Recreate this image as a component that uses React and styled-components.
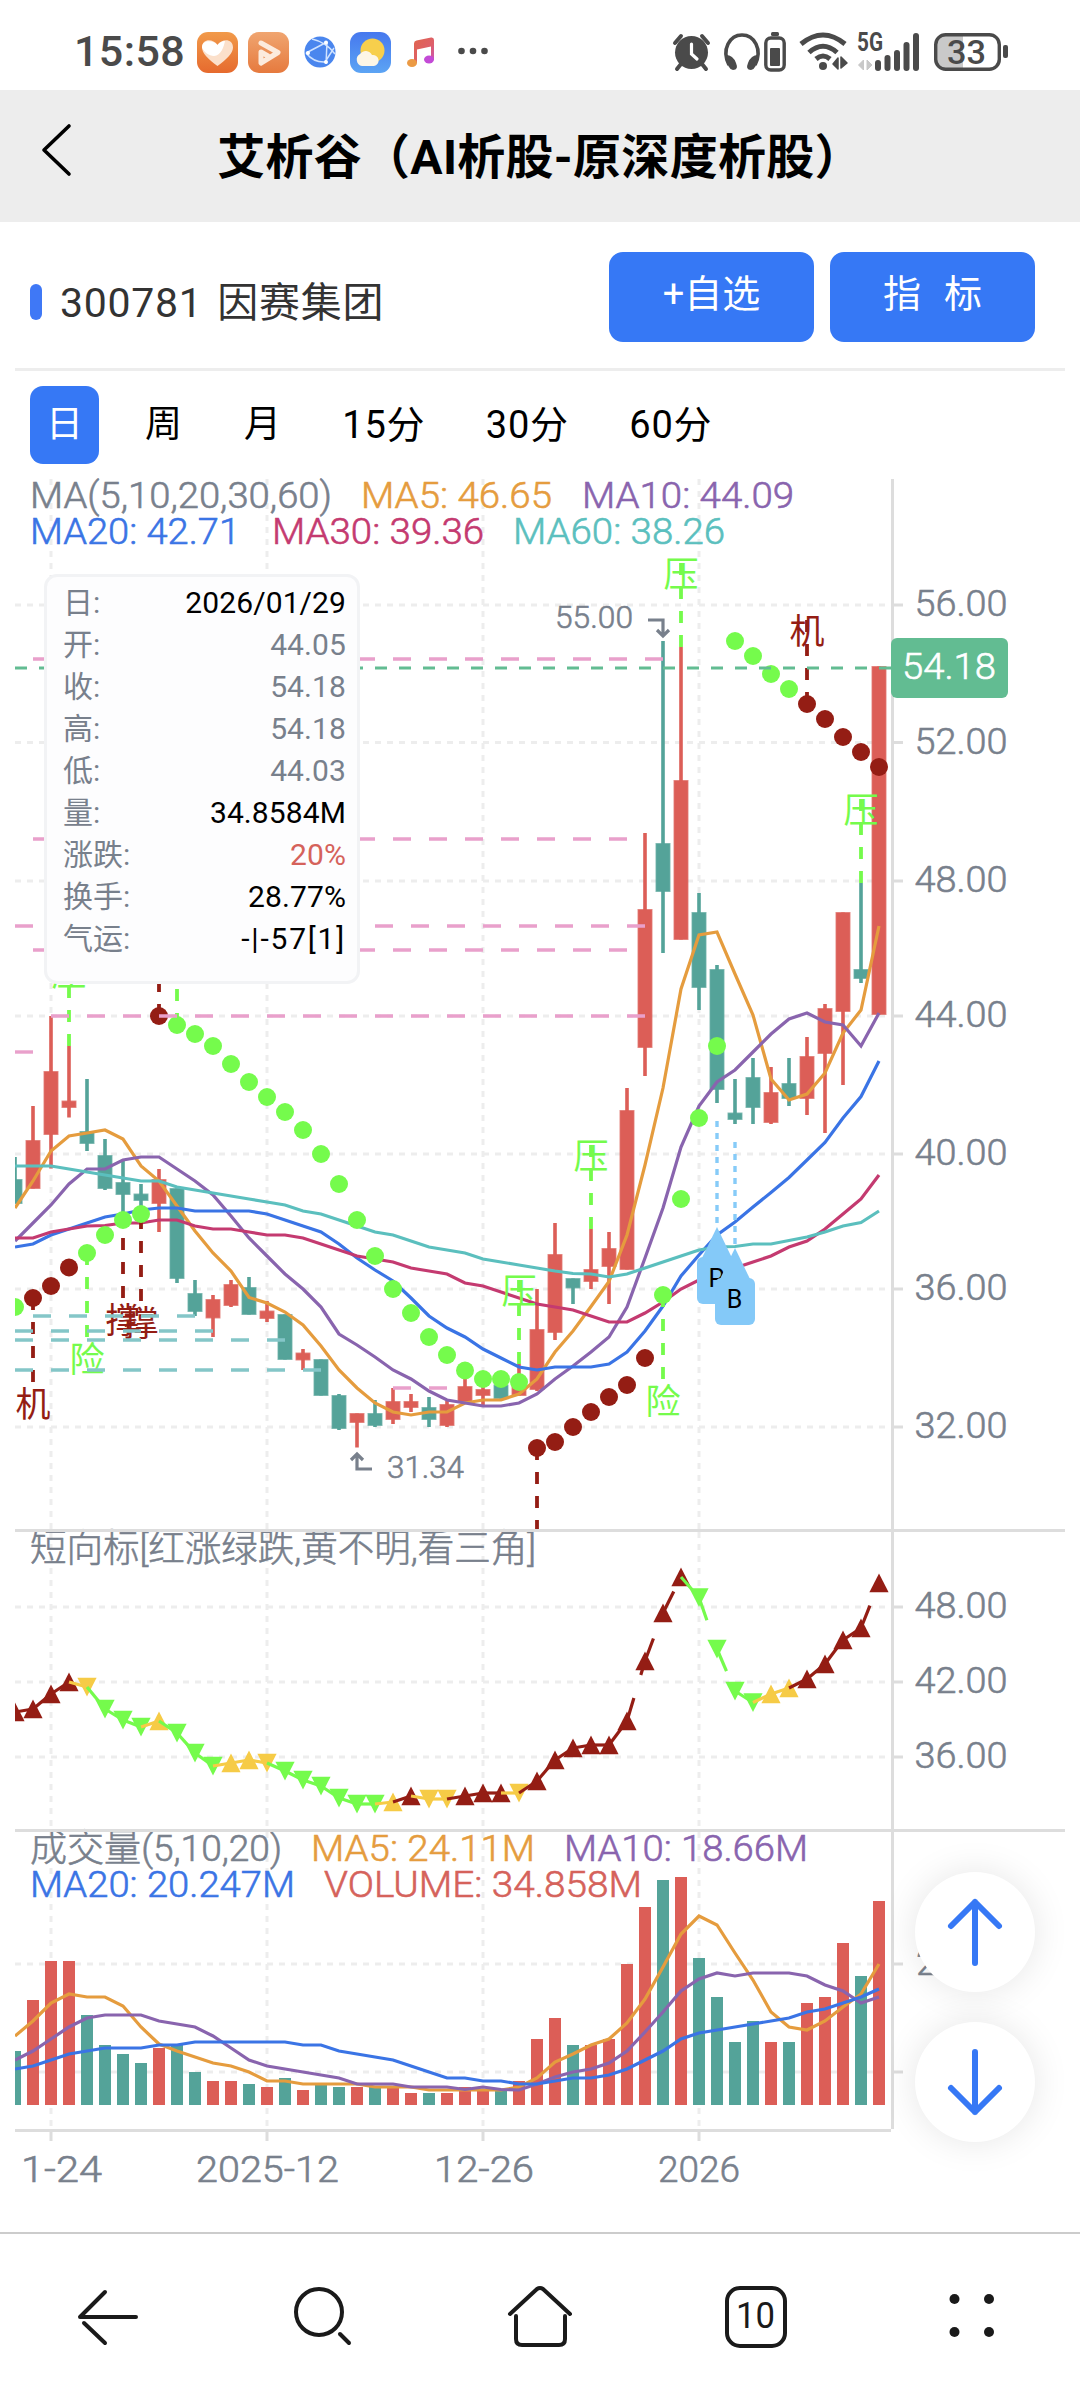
import React from 'react';
import styled, { createGlobalStyle } from 'styled-components';

const FONT = 'Roboto, "Noto Sans CJK SC", sans-serif';
const BLUE = '#3678f5';
const RED = '#dc5e57';
const TEAL = '#54a399';
const LIME = '#75fb4c';
const DARK = '#941d14';
const GOLD = '#f6cb46';
const GREY = '#78808c';
const AXIS = '#dddddd';
const GRID = '#ededed';

const GlobalStyle = createGlobalStyle`
  html, body {
    margin: 0;
    padding: 0;
    background: #fff;
  }
  body {
    width: 1080px;
    font-family: ${FONT};
  }
  svg {
    display: block;
    overflow: visible;
  }
  svg text {
    font-family: ${FONT};
  }
`;

const SPage = styled.div`
  width: 1080px;
  height: 2400px;
  display: flex;
  flex-direction: column;
  overflow: hidden;
  background: #fff;
`;
const SStatusBar = styled.div`
  height: 90px;
  box-sizing: border-box;
  padding: 24px 71px 10px 74px;
  display: flex;
  align-items: center;
  justify-content: space-between;
`;
const SStatusGroup = styled.div`
  display: flex;
  align-items: center;
  height: 56px;
`;
const SClock = styled.div`
  width: 112px;
  margin-top: -2px;
  color: #4a4a4a;
  font-size: 43px;
  line-height: 56px;
  font-weight: 500;
  letter-spacing: 0.4px;
`;
const SStatusIcon = styled.svg`
  flex: none;
  margin-left: ${p => p.$ml || 0}px;
`;
const SHeader = styled.div`
  height: 132px;
  background: #ededed;
  display: grid;
  grid-template-columns: 108px 1fr 108px;
  align-items: center;
`;
const SBack = styled.svg`
  margin: -12px 0 0 36px;
`;
const STitle = styled.div`
  padding-top: 4px;
  color: #000;
  font-size: 48px;
  line-height: 60px;
  font-weight: 700;
  letter-spacing: 0.3px;
  text-align: center;
  white-space: nowrap;
`;
const SStockRow = styled.div`
  height: 146px;
  box-sizing: border-box;
  padding: 30px 45px 26px 30px;
  display: flex;
  align-items: center;
`;
const SMark = styled.div`
  width: 12px;
  height: 36px;
  border-radius: 6px;
  background: #3f78f6;
  margin-top: 10px;
`;
const SStockName = styled.div`
  flex: 1;
  margin: 12px 0 0 18px;
  color: #333;
  font-size: 41px;
  line-height: 50px;
  letter-spacing: 0.7px;
  word-spacing: 4px;
`;
const SButton = styled.button`
  width: 205px;
  height: 90px;
  margin: 0 0 0 ${p => (p.$second ? 16 : 0)}px;
  padding: 0 0 5px;
  border: 0;
  border-radius: 14px;
  background: ${BLUE};
  color: #fff;
  font-family: inherit;
  font-size: 38px;
  line-height: 85px;
  word-spacing: ${p => (p.$second ? 2 : 0)}px;
  white-space: pre;
`;
const SDivider = styled.div`
  height: 3px;
  margin: 0 15px;
  background: #ededed;
`;
const STabs = styled.div`
  height: 108px;
  box-sizing: border-box;
  padding: 15px 30px;
  display: flex;
  gap: 30px;
`;
const STab = styled.div`
  width: ${p => (p.$wide ? 113.5 : 69)}px;
  height: 78px;
  line-height: 78px;
  border-radius: 13px;
  text-align: center;
  font-size: ${p => (p.$wide ? 38 : 37)}px;
  letter-spacing: ${p => (p.$wide ? 0.7 : 0)}px;
  color: ${p => (p.$active ? '#fff' : '#000')};
  background: ${p => (p.$active ? BLUE : 'transparent')};
`;
const SChartArea = styled.div`
  position: relative;
  height: 1753px;
`;
const STooltip = styled.div`
  position: absolute;
  left: 44px;
  top: 95px;
  width: 316px;
  height: 410px;
  box-sizing: border-box;
  padding: 5px 11px 0 16px;
  border: 3px solid #f2f3f5;
  border-radius: 13px;
  background: #fdfdfe;
`;
const STipRow = styled.div`
  display: flex;
  justify-content: space-between;
  height: 42px;
  line-height: 42px;
  font-size: 30px;
`;
const STipLabel = styled.span`
  color: ${GREY};
`;
const STipValue = styled.span`
  color: ${p => p.$color || '#000'};
  letter-spacing: ${p => (p.$spread ? 1.8 : 0.1)}px;
`;
const SFloat = styled.div`
  position: absolute;
  left: 915px;
  top: 1393px;
  display: flex;
  flex-direction: column;
  gap: 30px;
`;
const SRound = styled.div`
  width: 120px;
  height: 120px;
  border-radius: 60px;
  background: #fff;
  box-shadow: 0 0 36px rgba(0, 0, 0, 0.1);
`;
const SNav = styled.div`
  height: 168px;
  box-sizing: border-box;
  border-top: 2px solid #cccccc;
  display: flex;
`;
const SNavItem = styled.div`
  flex: 1;
  display: flex;
  align-items: center;
  justify-content: center;
`;

// bars are 18px apart, the first one is cut by the left edge of the pane
const px = i => 15 + 18 * i;

// [direction, high, body top, body bottom, low]
const candles = [
  ['d', 1157, 1179.5, 1203.5, 1203.5],
  ['u', 1106, 1140.5, 1188.5, 1188.5],
  ['u', 1016, 1071.5, 1134.5, 1168.5],
  ['u', 1046, 1101, 1107.5, 1117.5],
  ['d', 1079, 1131.5, 1143.5, 1151],
  ['d', 1139, 1155.5, 1188.5, 1190],
  ['d', 1160, 1182.5, 1194.5, 1214],
  ['d', 1184, 1194, 1200.5, 1209],
  ['u', 1169, 1179.5, 1203.5, 1232],
  ['d', 1188.5, 1188.5, 1278.5, 1283],
  ['d', 1280, 1293.5, 1311.5, 1316],
  ['u', 1295, 1299.5, 1318, 1337],
  ['u', 1280, 1284.5, 1305.5, 1307],
  ['d', 1277, 1287.5, 1314.5, 1314.5],
  ['u', 1301, 1311, 1318.5, 1322],
  ['d', 1314.5, 1314.5, 1359.5, 1359.5],
  ['u', 1349, 1353, 1360, 1370],
  ['d', 1359.5, 1359.5, 1395.5, 1395.5],
  ['d', 1394, 1395.5, 1428.5, 1430],
  ['u', 1413.5, 1413.5, 1422.5, 1447.5],
  ['d', 1400, 1413.5, 1425.5, 1427],
  ['u', 1388, 1401.5, 1419.5, 1424],
  ['u', 1394, 1401.5, 1407.5, 1412],
  ['d', 1397, 1407.5, 1419.5, 1427],
  ['u', 1401, 1404.5, 1425.5, 1427],
  ['u', 1378, 1386.5, 1401.5, 1401.5],
  ['u', 1385, 1389.5, 1395.5, 1406],
  ['d', 1385, 1385, 1398.5, 1398.5],
  ['u', 1364, 1385, 1395.5, 1395.5],
  ['u', 1289, 1329.5, 1389.5, 1391],
  ['u', 1223, 1254.5, 1332.5, 1340],
  ['d', 1278.5, 1278.5, 1288, 1304],
  ['u', 1229, 1269.5, 1281.5, 1289],
  ['u', 1232, 1248.5, 1266.5, 1304],
  ['u', 1088, 1110.5, 1269.5, 1269.5],
  ['u', 833, 909.5, 1047.5, 1076],
  ['d', 641, 843.5, 891.5, 953],
  ['u', 647, 780.5, 939.5, 939.5],
  ['d', 893, 912.5, 987.5, 1010],
  ['d', 965, 969.5, 1089.5, 1103],
  ['d', 1079, 1113, 1119.5, 1124],
  ['d', 1058, 1077.5, 1107.5, 1124],
  ['u', 1067, 1092.5, 1122.5, 1124],
  ['d', 1058, 1083.5, 1098.5, 1106],
  ['u', 1037, 1056.5, 1098.5, 1115],
  ['u', 1004, 1008.5, 1053.5, 1133],
  ['u', 912.5, 912.5, 1011.5, 1085],
  ['d', 883, 969.5, 978.5, 983],
  ['u', 666.5, 666.5, 1014.5, 1014.5]
];

const priceLines = [
  {
    color: '#e59c3e',
    ys: [1208, 1181, 1151, 1136, 1133, 1130, 1139, 1166, 1181, 1206, 1231, 1253, 1271, 1297.5, 1303, 1312, 1325, 1346, 1370, 1388, 1403, 1412, 1415, 1412, 1412, 1403, 1400, 1400, 1394, 1379, 1352, 1331, 1306.5, 1281.5, 1235, 1165, 1088, 989, 935, 932, 974, 1015, 1079, 1100, 1094, 1073, 1033, 1010, 926]
  },
  {
    color: '#8964ae',
    ys: [1241, 1223, 1205, 1184, 1169, 1169, 1160, 1157, 1157, 1169, 1181, 1195, 1216, 1238, 1256, 1274, 1289, 1307, 1334, 1345, 1357, 1370, 1379, 1391, 1400, 1403, 1406, 1406, 1403, 1394, 1379, 1366, 1352, 1337, 1307, 1258, 1208, 1147, 1106, 1082, 1070, 1052, 1034, 1019, 1013, 1022, 1025, 1046, 1013]
  },
  {
    color: '#3a74e5',
    ys: [1247, 1244, 1235, 1229, 1223, 1217, 1214, 1210, 1208, 1208, 1211, 1211, 1211, 1211, 1214, 1220, 1226, 1232, 1244, 1258, 1270, 1281, 1298, 1316, 1328, 1337, 1349, 1358, 1367, 1370, 1367, 1367, 1367, 1364, 1352, 1331, 1306, 1276, 1255, 1235, 1222, 1207, 1192.5, 1177.5, 1160, 1142.5, 1118, 1096.5, 1061]
  },
  {
    color: '#c43a70',
    ys: [1238, 1238, 1232, 1229, 1226, 1225.5, 1223, 1223, 1220, 1220, 1226, 1229, 1229, 1232, 1235, 1235, 1238, 1244, 1250, 1256, 1259, 1262, 1268, 1271, 1274, 1283, 1286, 1292, 1298, 1304, 1307, 1310, 1316, 1322, 1322, 1313, 1302, 1289, 1280, 1274, 1268, 1262, 1256, 1247, 1241, 1229, 1214, 1199, 1175]
  },
  {
    color: '#5bbfbe',
    ys: [1166, 1166, 1166, 1169, 1172, 1175, 1178, 1181, 1181, 1187, 1190, 1193, 1196, 1199, 1202, 1205, 1211, 1214, 1220, 1226, 1232, 1235, 1241, 1247, 1250, 1253, 1259, 1262, 1265, 1268, 1271, 1273.5, 1274, 1277, 1274, 1268, 1262, 1256, 1250, 1247, 1246.5, 1244, 1244, 1240.5, 1237, 1232, 1226, 1222.5, 1211]
  }
];

// parabolic dots, one for each bar
const dots = [1307, 1298, 1286, 1267.5, 1253, 1235, 1220, 1214, 1016, 1025, 1034, 1046, 1064, 1082, 1097, 1112, 1130, 1154, 1184, 1220, 1256, 1289, 1313, 1337, 1355, 1370.5, 1379, 1379, 1382, 1448, 1442, 1427, 1412, 1397, 1385, 1358, 1295, 1199, 1118, 1046, 641, 656, 674, 689, 704, 719, 737, 752, 767];
const darkDots = [1, 2, 3, 8, 29, 30, 31, 32, 33, 34, 35, 44, 45, 46, 47, 48];

// [bar, char, stem start, direction, color]
const signals = [
  [3, '压', 1046, -1, LIME],
  [28, '压', 1364, -1, LIME],
  [32, '压', 1229, -1, LIME],
  [37, '压', 647, -1, LIME],
  [47, '压', 883, -1, LIME],
  [8, '', 1016, -1, DARK],
  [9, '', 1025, -1, LIME],
  [44, '机', 704, -1, DARK],
  [1, '机', 1298, 1, DARK],
  [4, '险', 1253, 1, LIME],
  [6, '撑', 1214, 1, DARK],
  [7, '撑', 1217, 1, DARK],
  [29, '', 1448, 1, DARK],
  [36, '险', 1295, 1, LIME]
];

// [y, from, to]
const pinkLevels = [
  [659, 33, 663],
  [839, 33, 627],
  [926, 15, 645],
  [950, 33, 627],
  [1016, 51, 645],
  [1052, 15, 33],
  [1388, 393, 447]
];
const tealLevels = [
  [1316, 33, 195],
  [1331, 15, 213],
  [1340, 15, 285],
  [1370, 15, 321]
];

// trend pane: U dark up, D green down, u / d gold
const trend = [
  [1712, 'U'], [1709, 'U'], [1694, 'U'], [1682, 'U'], [1687, 'd'], [1709, 'D'], [1720, 'D'],
  [1727, 'D'], [1721, 'u'], [1733, 'D'], [1753, 'D'], [1766, 'D'], [1763, 'u'], [1760, 'u'],
  [1763, 'd'], [1771, 'D'], [1780, 'D'], [1786, 'D'], [1798, 'D'], [1804, 'D'], [1804, 'D'],
  [1802, 'u'], [1796, 'U'], [1799, 'd'], [1799, 'd'], [1796, 'U'], [1793, 'U'], [1793, 'U'],
  [1793, 'd'], [1781, 'U'], [1760, 'U'], [1748, 'U'], [1745, 'U'], [1745, 'U'], [1721, 'U'],
  [1661, 'U'], [1613, 'U'], [1577, 'U'], [1597.5, 'D'], [1649, 'D'], [1691, 'D'], [1702.5, 'D'],
  [1694, 'u'], [1688, 'u'], [1679, 'U'], [1664, 'U'], [1640, 'U'], [1628, 'U'], [1583, 'U']
];
const trendColor = { U: DARK, D: LIME, u: GOLD, d: GOLD };

const volumes = [2051, 2000, 1961, 1961, 2015, 2045, 2054, 2063, 2048, 2045, 2072, 2081, 2081, 2084, 2087, 2078, 2090, 2084, 2087, 2087, 2087, 2087, 2093, 2093, 2093, 2087, 2089, 2090, 2081, 2039, 2018, 2045, 2045, 2039, 1964, 1907, 1880, 1877, 1958, 1997, 2042, 2021, 2042, 2042, 2003, 1997, 1943, 1976, 1901];
const volumeDown = [0, 4, 5, 6, 7, 9, 10, 13, 15, 17, 18, 20, 23, 27, 31, 36, 38, 39, 40, 41, 43, 47];
const volumeLines = [
  {
    color: '#e59c3e',
    ys: [2036, 2021, 2003, 1994, 1997, 1997, 2006, 2027, 2044, 2051, 2057, 2063, 2066, 2072, 2081, 2081, 2084, 2084, 2084, 2084, 2087, 2087, 2087, 2090, 2090, 2090, 2090, 2090, 2087, 2078, 2062, 2054, 2045, 2039, 2023, 1999, 1967, 1934, 1916, 1925, 1953, 1980, 2012, 2027, 2030, 2021, 2007, 1994, 1964]
  },
  {
    color: '#8964ae',
    ys: [2060, 2051, 2039, 2027, 2018, 2015, 2015, 2015, 2021, 2024, 2027, 2036, 2048, 2060, 2066, 2069, 2072, 2075, 2078, 2084, 2084, 2084, 2087, 2087, 2087, 2089.5, 2087, 2089.5, 2090, 2084, 2077, 2072, 2069, 2063, 2051, 2032, 2012, 1991, 1979, 1973, 1976, 1973, 1973, 1973, 1976, 1985, 1991, 2003, 1997]
  },
  {
    color: '#3a74e5',
    ys: [2069, 2066, 2060, 2054, 2051, 2048, 2048, 2048, 2045, 2045, 2042, 2042, 2042, 2042, 2042, 2042, 2045, 2045, 2051, 2054, 2057, 2060, 2066, 2072, 2078, 2078, 2081, 2081, 2084, 2084, 2081, 2078, 2078, 2075, 2069, 2060, 2051, 2039, 2033, 2030, 2027, 2024, 2021, 2018, 2012, 2009, 2003, 1997, 1989]
  }
];

// [text, x, baseline, width, color]
const legends = [
  ['MA(5,10,20,30,60)', 30, 508, 302, GREY],
  ['MA5: 46.65', 361, 508, 191, '#e59c3e'],
  ['MA10: 44.09', 582, 508, 212, '#8964ae'],
  ['MA20: 42.71', 30, 544, 210, '#3a74e5'],
  ['MA30: 39.36', 272, 544, 212, '#c43a70'],
  ['MA60: 38.26', 513, 544, 212, '#5bbfbe'],
  ['短向标[红涨绿跌,黄不明,看三角]', 30, 1561, 506, GREY],
  ['成交量(5,10,20)', 30, 1861, 252, GREY],
  ['MA5: 24.11M', 311, 1861, 224, '#e59c3e'],
  ['MA10: 18.66M', 564, 1861, 244, '#8964ae'],
  ['MA20: 20.247M', 30, 1897, 265, '#3a74e5'],
  ['VOLUME: 34.858M', 324, 1897, 318, '#d5625b']
];

const yTicks = [
  [605, '56.00'],
  [742.5, '52.00'],
  [881, '48.00'],
  [1016, '44.00'],
  [1154, '40.00'],
  [1289, '36.00'],
  [1427, '32.00'],
  [1607, '48.00'],
  [1682, '42.00'],
  [1757, '36.00']
];
const xTicks = [
  [51, '1-24', 21, 81],
  [267, '2025-12', 196, 143],
  [483, '12-26', 434, 100],
  [699, '2026', 658, 82]
];

// light face with a hairline outline, lands between light and regular
const Label = ({ x, y, width, color = GREY, size = 37.5, children }) => (
  <text
    x={x}
    y={y}
    fill={color}
    stroke={color}
    strokeWidth="0.6"
    fontSize={size}
    fontWeight="300"
    textLength={width}
    lengthAdjust="spacingAndGlyphs"
  >
    {children}
  </text>
);

const Line = ({ ys, color }) => (
  <polyline
    points={ys.map((y, i) => `${px(i)},${y}`).join(' ')}
    fill="none"
    stroke={color}
    strokeWidth="3.2"
  />
);

const Levels = ({ items, color }) => (
  <g stroke={color} strokeWidth="3.4" strokeDasharray="18 18">
    {items.map(([y, from, to]) => (
      <line key={y} x1={from} x2={to} y1={y} y2={y} />
    ))}
  </g>
);

const Pin = ({ x, y, letter }) => (
  <g>
    <line x1={x} x2={x} y1={y - 106} y2={y} stroke="#86cbf8" strokeWidth="3.4" strokeDasharray="6 6" />
    <path d={`M${x} ${y}L${x + 15} ${y + 31}H${x - 15}Z`} fill="#84c9f8" />
    <rect x={x - 20} y={y + 30} width="40" height="47" rx="6" fill="#84c9f8" />
    <text x={x - 0.5} y={y + 59.5} fontSize="25" textAnchor="middle" fill="#000">
      {letter}
    </text>
  </g>
);

function Grid() {
  return (
    <g stroke={GRID} strokeWidth="3" strokeDasharray="6 6">
      {yTicks.map(([y]) => (
        <line key={y} x1="15" x2="891" y1={y} y2={y} />
      ))}
      <line x1="15" x2="891" y1="1964" y2="1964" />
      <line x1="15" x2="891" y1="2072" y2="2072" />
      {xTicks.map(([x]) => (
        <g key={x}>
          <line x1={x} x2={x} y1="479" y2="1529" />
          <line x1={x} x2={x} y1="1532" y2="1829" />
          <line x1={x} x2={x} y1="1832" y2="2129" />
        </g>
      ))}
    </g>
  );
}

function Axes() {
  return (
    <g>
      <g stroke={AXIS} strokeWidth="3">
        <line x1="892.5" x2="892.5" y1="479" y2="2129" />
        <line x1="15" x2="1065" y1="1530.5" y2="1530.5" />
        <line x1="15" x2="1065" y1="1830.5" y2="1830.5" />
        <line x1="15" x2="891" y1="2130.5" y2="2130.5" />
        {yTicks.map(([y]) => (
          <line key={y} x1="894" x2="903" y1={y} y2={y} />
        ))}
        <line x1="894" x2="903" y1="1964" y2="1964" />
        <line x1="894" x2="903" y1="2072" y2="2072" />
        {xTicks.map(([x]) => (
          <line key={x} x1={x} x2={x} y1="2132" y2="2141" />
        ))}
      </g>
      {yTicks.map(([y, text]) => (
        <Label key={y} x={914.5} y={y + 11} width={93}>
          {text}
        </Label>
      ))}
      <Label x={916} y={1975}>
        2
      </Label>
      {xTicks.map(([x, text, left, width]) => (
        <Label key={x} x={left} y={2182} width={width}>
          {text}
        </Label>
      ))}
    </g>
  );
}

function PricePane() {
  return (
    <g clipPath="url(#panes)">
      {candles.map(([dir, high, top, bottom, low], i) => {
        const color = dir === 'u' ? RED : TEAL;
        return (
          <g key={i} fill={color}>
            <rect x={px(i) - 1.8} y={high} width="3.6" height={low - high} />
            <rect x={px(i) - 7.5} y={top - 0.5} width="15" height={bottom - top + 1} fillOpacity="0.7" />
            <rect x={px(i) - 6.8} y={top + 0.3} width="13.6" height={bottom - top - 0.6} />
          </g>
        );
      })}
      {priceLines.map(line => (
        <Line key={line.color} {...line} />
      ))}
      {signals.map(([i, char, start, dir, color]) => (
        <g key={i}>
          <line
            x1={px(i)}
            x2={px(i)}
            y1={start}
            y2={Math.min(start + dir * 84, 1529)}
            stroke={color}
            strokeWidth="3.8"
            strokeDasharray="12 12"
          />
          {char && (
            <text
              x={px(i)}
              y={dir < 0 ? start - 60.5 : start + 119}
              fill={color}
              fontSize="35"
              textAnchor="middle"
            >
              {char}
            </text>
          )}
        </g>
      ))}
      {dots.map((y, i) => (
        <circle key={i} cx={px(i)} cy={y} r="9" fill={darkDots.includes(i) ? DARK : LIME} />
      ))}
      <Levels items={pinkLevels} color="#e9a0cb" />
      <Levels items={tealLevels} color="#84c6c8" />
      <Pin x={717} y={1227} letter="P" />
      <Pin x={735} y={1248} letter="B" />
      <line x1="15" x2="891" y1="668" y2="668" stroke="#62bc92" strokeWidth="3" strokeDasharray="12 12" />
    </g>
  );
}

function PriceMarks() {
  return (
    <g>
      <Label x={555} y={628} width={78} size={31}>
        55.00
      </Label>
      <Label x={387} y={1477.5} width={77} size={31}>
        31.34
      </Label>
      <g fill="none" stroke={GREY} strokeWidth="3.2">
        <path d="M648 620H663V635M657 630L663 636L669 630" />
        <path d="M372 1469H357V1454M351 1460L357 1454L363 1460" />
      </g>
      <rect x="891" y="638" width="117" height="60" rx="6" fill="#62bc92" />
      <Label x={902} y={679} width={94} color="#fff">
        54.18
      </Label>
    </g>
  );
}

function TrendPane() {
  return (
    <g clipPath="url(#panes)">
      {trend.map(([y, type], i) => {
        const x = px(i);
        const color = trendColor[type];
        const up = type.toLowerCase() === 'u' ? 1 : -1;
        return (
          <g key={i}>
            {i > 0 && (
              <line
                x1={px(i - 1)}
                y1={trend[i - 1][0]}
                x2={x}
                y2={y}
                stroke={color}
                strokeWidth="3.2"
                strokeDasharray="24 24"
              />
            )}
            <path d={`M${x} ${y - 9.5 * up}L${x + 9.6} ${y + 9.3 * up}H${x - 9.6}Z`} fill={color} />
          </g>
        );
      })}
    </g>
  );
}

function VolumePane() {
  return (
    <g clipPath="url(#panes)">
      {volumes.map((y, i) => (
        <rect
          key={i}
          x={px(i) - 6}
          y={y}
          width="12"
          height={2105 - y}
          fill={volumeDown.includes(i) ? TEAL : RED}
        />
      ))}
      {volumeLines.map(line => (
        <Line key={line.color} {...line} />
      ))}
    </g>
  );
}

const tips = [
  ['日:', '2026/01/29'],
  ['开:', '44.05', GREY],
  ['收:', '54.18', GREY],
  ['高:', '54.18', GREY],
  ['低:', '44.03', GREY],
  ['量:', '34.8584M'],
  ['涨跌:', '20%', '#d5625b'],
  ['换手:', '28.77%'],
  ['气运:', '-|-57[1]']
];

function Chart() {
  return (
    <SChartArea>
      <svg width="1080" height="1753" viewBox="0 479 1080 1753">
        <defs>
          <clipPath id="panes">
            <rect x="15" y="479" width="876" height="1651" />
          </clipPath>
        </defs>
        <Grid />
        <PricePane />
        <TrendPane />
        <VolumePane />
        {legends.map(([text, x, y, width, color]) => (
          <Label key={text} x={x} y={y} width={width} color={color}>
            {text}
          </Label>
        ))}
        <Axes />
        <PriceMarks />
      </svg>
      <STooltip>
        {tips.map(([label, value, color]) => (
          <STipRow key={label}>
            <STipLabel>{label}</STipLabel>
            <STipValue $color={color} $spread={value.startsWith('-')}>
              {value}
            </STipValue>
          </STipRow>
        ))}
      </STooltip>
      <SFloat>
        <SRound>
          <svg width="120" height="120" fill="none" stroke={BLUE} strokeWidth="6" strokeLinecap="round" strokeLinejoin="round">
            <path d="M60 91V30M36 54L60 30L84 54" />
          </svg>
        </SRound>
        <SRound>
          <svg width="120" height="120" fill="none" stroke={BLUE} strokeWidth="6" strokeLinecap="round" strokeLinejoin="round">
            <path d="M60 30V90M36 66L60 90L84 66" />
          </svg>
        </SRound>
      </SFloat>
    </SChartArea>
  );
}

function StatusBar() {
  return (
    <SStatusBar>
      <SStatusGroup>
        <SClock>15:58</SClock>
        <SStatusIcon $ml={11} width="41" height="41" viewBox="0 0 41 41">
          <defs>
            <linearGradient id="heartBg" x1="0" y1="0" x2="0" y2="1">
              <stop offset="0" stopColor="#f19a4a" />
              <stop offset="1" stopColor="#e66a2e" />
            </linearGradient>
          </defs>
          <rect width="41" height="41" rx="11" fill="url(#heartBg)" />
          <path d="M20.500 34C11 27 5 21 5 15.500C5 7 15.500 6 20.500 13C25.500 6 36 7 36 15.500C36 21 30 27 20.500 34Z" fill="#fbe0cb" />
          <path d="M20.500 13C17 8 5 7 5 15.500C7 20 12 24 17 24C24 24 27 14 28 9C25 9 22 11 20.500 13Z" fill="#fff" />
        </SStatusIcon>
        <SStatusIcon $ml={10} width="41" height="41" viewBox="0 0 41 41">
          <defs>
            <linearGradient id="playBg" x1="0" y1="0" x2="0" y2="1">
              <stop offset="0" stopColor="#f0a570" />
              <stop offset="1" stopColor="#e67a3e" />
            </linearGradient>
          </defs>
          <rect width="41" height="41" rx="11" fill="url(#playBg)" />
          <path d="M13 11L30 20.500L13 31V20L20 24" fill="none" stroke="#fcebdd" strokeWidth="5" strokeLinejoin="round" strokeLinecap="round" />
        </SStatusIcon>
        <SStatusIcon $ml={15} width="32" height="32" viewBox="0 0 32 32">
          <circle cx="16" cy="16" r="15.500" fill="#4a86ee" />
          <g fill="none" stroke="#cfe2ff" strokeWidth="1.500">
            <path d="M2 17L23 6M23 6L22 28M2 17Q10 27 22 26M8 3Q22 6 31 18M21 26L30 12" />
          </g>
          <g fill="#fff">
            <circle cx="4" cy="17" r="2" />
            <circle cx="22" cy="6.500" r="2" />
            <circle cx="22" cy="26" r="2" />
          </g>
        </SStatusIcon>
        <SStatusIcon $ml={14} width="41" height="41" viewBox="0 0 41 41">
          <defs>
            <linearGradient id="skyBg" x1="0" y1="0" x2="0" y2="1">
              <stop offset="0" stopColor="#4678ee" />
              <stop offset="1" stopColor="#5ca4f4" />
            </linearGradient>
          </defs>
          <rect width="41" height="41" rx="11" fill="url(#skyBg)" />
          <circle cx="22.500" cy="18.500" r="12" fill="#f7cf4c" />
          <path d="M12 34a6.500 6.500 0 0 1-2-12a7 7 0 0 1 12 1a5.500 5.500 0 0 1 2 11Z" fill="#fdf6e6" />
        </SStatusIcon>
        <SStatusIcon $ml={16} width="27" height="31" viewBox="0 0 27 31">
          <defs>
            <linearGradient id="noteBg" x1="0" y1="0" x2="1" y2="1">
              <stop offset="0" stopColor="#e0644c" />
              <stop offset="0.600" stopColor="#de5f6a" />
              <stop offset="1" stopColor="#c653c8" />
            </linearGradient>
          </defs>
          <path d="M7 26V6.500Q7 4 9.500 3.500L24 0.500Q27 0 27 3V23H24V9.500L10 12.500V26Z" fill="url(#noteBg)" />
          <ellipse cx="5" cy="26" rx="5" ry="4" fill="#eb9a44" />
          <ellipse cx="22" cy="22.500" rx="5" ry="4" fill="#c34bd6" />
        </SStatusIcon>
        <SStatusIcon $ml={24} width="30" height="8" viewBox="0 0 30 8" fill="#4a4a4a">
          <circle cx="3.500" cy="3" r="3.300" />
          <circle cx="15" cy="3" r="3.300" />
          <circle cx="26.500" cy="3" r="3.300" />
        </SStatusIcon>
      </SStatusGroup>
      <SStatusGroup>
        <SStatusIcon width="37" height="38" viewBox="0 0 37 38">
          <circle cx="18.500" cy="19.500" r="16.500" fill="#4a4a4a" />
          <path d="M2 10L8 3M35 10L29 3M8 31L4 36M29 31L33 36" stroke="#4a4a4a" strokeWidth="4" strokeLinecap="round" />
          <path d="M18.500 11V21L24 26" fill="none" stroke="#fff" strokeWidth="3.200" strokeLinecap="round" />
        </SStatusIcon>
        <SStatusIcon $ml={14} width="36" height="38" viewBox="0 0 36 38">
          <path d="M5 32C1 24 1 17 4 11C10 -1 26 -1 32 11C35 17 35 24 31 32" fill="none" stroke="#4a4a4a" strokeWidth="3.600" />
          <path d="M2 22Q9 22 12 30Q15 37 9 37Q3 36 2 22ZM34 22Q27 22 24 30Q21 37 27 37Q33 36 34 22Z" fill="#4a4a4a" />
        </SStatusIcon>
        <SStatusIcon $ml={4} width="22" height="40" viewBox="0 0 22 40">
          <rect x="7" y="0" width="8" height="4" rx="1.500" fill="#4a4a4a" />
          <rect x="1.800" y="6" width="18.400" height="32" rx="5" fill="none" stroke="#4a4a4a" strokeWidth="3.400" />
          <rect x="6" y="16" width="10" height="18" rx="1" fill="#4a4a4a" />
        </SStatusIcon>
        <SStatusIcon $ml={14} width="50" height="38" viewBox="0 0 50 38">
          <g fill="none" stroke="#4a4a4a" strokeWidth="5">
            <path d="M1 11Q23 -7 45 11" />
            <path d="M9 19.500Q23 7 37 19.500" />
            <path d="M16 26Q23 20 30 26" />
          </g>
          <circle cx="23" cy="33" r="4" fill="#4a4a4a" />
          <path d="M38 25V36L33 31ZM41 35V24L47 30Z" fill="#4a4a4a" stroke="#4a4a4a" strokeWidth="1.500" strokeLinejoin="round" />
        </SStatusIcon>
        <SStatusIcon $ml={7} width="64" height="39" viewBox="0 0 64 39">
          <text x="0" y="18" fontSize="25" fontWeight="700" fill="#4a4a4a" textLength="26" lengthAdjust="spacingAndGlyphs">
            5G
          </text>
          <path d="M6.500 27V37L1.500 32ZM10 37V27L15 32Z" fill="#c8c8c8" stroke="#c8c8c8" strokeLinejoin="round" />
          <g fill="#4a4a4a">
            <rect x="18" y="27" width="6" height="11" rx="3" />
            <rect x="27.500" y="22" width="6" height="16" rx="3" />
            <rect x="37" y="17" width="6" height="21" rx="3" />
            <rect x="46.500" y="9" width="6" height="29" rx="3" />
            <rect x="56" y="0" width="6" height="38" rx="3" />
          </g>
        </SStatusIcon>
        <SStatusIcon $ml={13} width="75" height="38" viewBox="0 0 75 38">
          <path d="M13 2H29V36H13Q2 36 2 25V13Q2 2 13 2Z" fill="#c9c9c9" />
          <rect x="1.700" y="1.700" width="63.600" height="34.600" rx="10" fill="none" stroke="#4a4a4a" strokeWidth="3.400" />
          <rect x="69" y="12" width="5" height="13" rx="2" fill="#4a4a4a" />
          <text x="13" y="31" fontSize="34" fontWeight="500" fill="#4a4a4a" textLength="39" lengthAdjust="spacingAndGlyphs">
            33
          </text>
        </SStatusIcon>
      </SStatusGroup>
    </SStatusBar>
  );
}

const NavIcon = ({ children }) => (
  <SNavItem>
    <svg width="80" height="80" viewBox="0 0 80 80" fill="none" stroke="#1a1a1a" strokeWidth="4" strokeLinecap="round" strokeLinejoin="round">
      {children}
    </svg>
  </SNavItem>
);

function App() {
  return (
    <SPage>
      <GlobalStyle />
      <StatusBar />
      <SHeader>
        <SBack width="38" height="56" viewBox="0 0 38 56" fill="none" stroke="#000" strokeWidth="3.600" strokeLinecap="round" strokeLinejoin="round">
          <path d="M33 4L8 28L33 52" />
        </SBack>
        <STitle>艾析谷（AI析股-原深度析股）</STitle>
      </SHeader>
      <SStockRow>
        <SMark />
        <SStockName>300781 因赛集团</SStockName>
        <SButton>+自选</SButton>
        <SButton $second>{'指  标'}</SButton>
      </SStockRow>
      <SDivider />
      <STabs>
        <STab $active>日</STab>
        <STab>周</STab>
        <STab>月</STab>
        <STab $wide>15分</STab>
        <STab $wide>30分</STab>
        <STab $wide>60分</STab>
      </STabs>
      <Chart />
      <SNav>
        <NavIcon>
          <path d="M68 40H12L37 15M16 46L37 66" />
        </NavIcon>
        <NavIcon>
          <circle cx="35" cy="35" r="23" />
          <path d="M56 57L65 66" />
        </NavIcon>
        <NavIcon>
          <path d="M10 37L37 12Q40 10 43 12L70 37" />
          <path d="M16 39V62Q16 68 22 68H59Q65 68 65 62V39" />
        </NavIcon>
        <NavIcon>
          <rect x="11" y="11" width="58" height="58" rx="13" />
          <text x="20" y="51" fontSize="36" fill="#1a1a1a" stroke="none" textLength="39" lengthAdjust="spacingAndGlyphs">
            10
          </text>
        </NavIcon>
        <NavIcon>
          <g fill="#1a1a1a" stroke="none">
            <circle cx="22.500" cy="22" r="5" />
            <circle cx="57" cy="22" r="5" />
            <circle cx="22.500" cy="55" r="5" />
            <circle cx="57" cy="55" r="5" />
          </g>
        </NavIcon>
      </SNav>
    </SPage>
  );
}

export default App;
